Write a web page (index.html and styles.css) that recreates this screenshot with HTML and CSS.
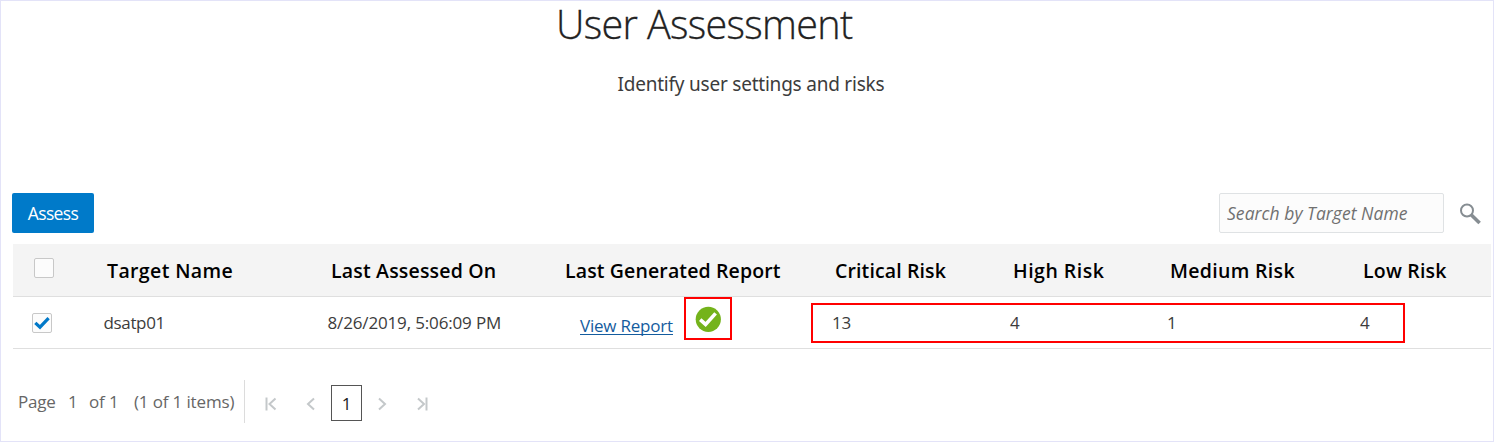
FILE: index.html
```html
<!DOCTYPE html>
<html lang="en">
<head>
<meta charset="utf-8">
<title>User Assessment</title>
<link rel="stylesheet" href="styles.css">
</head>
<body>
<main class="page">
  <header class="intro">
    <h1 class="title">User Assessment</h1>
    <p class="subtitle">Identify user settings and risks</p>
  </header>
  <div class="toolbar">
    <button class="assess" type="button"><span>Assess</span></button>
    <div class="search">
      <input class="search-input" type="text" placeholder="Search by Target Name">
      <svg class="search-icon" viewBox="0 0 22 22" width="22" height="22"><circle cx="8" cy="7.5" r="6" fill="none" stroke="#868d92" stroke-width="2"/><path d="M12.4 12l8.2 8" stroke="#868d92" stroke-width="3.6" fill="none"/></svg>
    </div>
  </div>
  <section class="table">
    <div class="row head">
      <div class="pick"><span class="box"></span></div>
      <div class="t-name">Target Name</div>
      <div class="t-date">Last Assessed On</div>
      <div class="t-report">Last Generated Report</div>
      <div class="t-crit">Critical Risk</div>
      <div class="t-high">High Risk</div>
      <div class="t-med">Medium Risk</div>
      <div class="t-low">Low Risk</div>
    </div>
    <div class="row data">
      <div class="pick"><span class="box"><svg viewBox="0 0 16 16" width="16" height="16"><path d="M1.3 7.8L6 12.2L14.6 3.2" fill="none" stroke="#0078c8" stroke-width="3.2"/></svg></span></div>
      <div class="name">dsatp01</div>
      <div class="date">8/26/2019, 5:06:09 PM</div>
      <div class="report"><a class="link" href="#">View Report</a><span class="status"><svg viewBox="0 0 26 26" width="26" height="26"><circle cx="13.3" cy="13.3" r="12.6" fill="#74b31b"/><path d="M5.2 13.6L10.6 18.4L20.6 7.4" fill="none" stroke="#fff" stroke-width="3.6"/></svg></span></div>
      <div>13</div>
      <div>4</div>
      <div>1</div>
      <div>4</div>
      <div class="highlight"></div>
    </div>
  </section>
  <footer class="pager">
    <div class="summary"><span class="word">Page</span><span class="current">1</span><span class="of">of 1</span><span class="items">(1 of 1 items)</span></div>
    <nav class="nav">
      <svg class="first" viewBox="0 0 12 14" width="12" height="14"><path d="M1.5 .5v13"/><path d="M10.5 1.5L4.5 7l6 5.5"/></svg>
      <svg class="prev" viewBox="0 0 12 14" width="12" height="14"><path d="M9 1.5L3 7l6 5.5"/></svg>
      <span class="number">1</span>
      <svg class="next" viewBox="0 0 12 14" width="12" height="14"><path d="M3 1.5L9 7l-6 5.5"/></svg>
      <svg class="last" viewBox="0 0 12 14" width="12" height="14"><path d="M2 1.5L8 7l-6 5.5"/><path d="M10.5 .5v13"/></svg>
    </nav>
  </footer>
</main>
</body>
</html>
```
FILE: styles.css
```css
* { box-sizing: border-box; }
body { margin: 0; background: #fff; color: #3c3c3c; font-family: "Open Sans", "Noto Sans", sans-serif; }
.page { width: 1494px; height: 442px; border: 1px solid #e3e3f8; }
.intro { height: 192px; }
.title { margin: 0; padding: 0 0 0 555px; font-size: 39.5px; font-weight: 300; line-height: 46px; letter-spacing: -.65px; white-space: nowrap; color: #222; -webkit-text-stroke: .3px #222; }
.subtitle { margin: 0; padding: 23px 0 0 616.5px; font: 19px/28px "Noto Sans", sans-serif; letter-spacing: -.22px; color: #3c3c3c; }
.toolbar { height: 51px; padding: 0 12px 0 11px; display: flex; justify-content: space-between; align-items: flex-start; }
.assess { width: 82px; height: 40px; padding: 0; border: 0; border-radius: 2px; background: #007ac9; color: #fff; font: 17.5px/40px "Open Sans", sans-serif; letter-spacing: -.65px; }
.search { display: flex; gap: 15px; }
.search-input { width: 225px; height: 40px; padding: 0 7px; border: 1px solid #dfe2e4; border-radius: 2px; background: #fcfcfc; font: italic 17.5px "Open Sans", sans-serif; letter-spacing: .05px; outline: 0; }
.search-input::placeholder { color: #707070; opacity: 1; }
.search-icon { margin-top: 10px; }
.table { width: 1478px; margin-left: 12px; }
.row { display: grid; grid-template-columns: 91px 224px 234px 270px 178px 157px 193px 131px; position: relative; border-bottom: 1px solid #dfdfdf; white-space: nowrap; }
.head { height: 53px; background: #f4f4f4; color: #000; font-size: 19.5px; font-weight: 600; line-height: 54px; }
.data { height: 52px; font-size: 17px; line-height: 52px; letter-spacing: -.23px; }
.head > div:not(.pick) { padding-left: 3px; }
.head .t-name, .head .t-date { padding-left: 2px; }
.t-name { letter-spacing: .37px; }
.t-date { letter-spacing: .18px; }
.t-report { letter-spacing: .13px; }
.t-crit { letter-spacing: .12px; }
.head .t-high { padding-left: 2px; letter-spacing: .5px; }
.t-med { letter-spacing: .32px; }
.t-low { letter-spacing: .2px; }
.pick { padding: 14px 0 0 21px; line-height: 0; }
.data .pick { padding: 16px 0 0 19px; }
.box { display: inline-flex; align-items: center; justify-content: center; width: 20px; height: 20px; border: 1px solid #c8c8c8; border-radius: 2px; background: #fcfcfc; }
.date { letter-spacing: -.15px; }
.date, .name { text-indent: -.5px; }
.name { letter-spacing: -.35px; }
.report { display: flex; padding-left: 18px; }
.link { height: 20px; margin-top: 18px; line-height: 22px; color: #145c9e; text-decoration: none; border-bottom: 1px solid #145c9e; }
.status { display: flex; align-items: center; justify-content: center; width: 48px; height: 43px; margin: 0 0 0 11px; border: 2px solid #f00; }
.highlight { position: absolute; left: 798px; top: 6px; width: 594px; height: 40px; border: 2px solid #f00; }
.pager { display: flex; padding-top: 31px; }
.summary { width: 244px; height: 43px; padding-left: 17px; border-right: 1px solid #dcdcdc; font-size: 17px; line-height: 43px; letter-spacing: -.15px; color: #666; display: flex; white-space: nowrap; }
.word { width: 50px; letter-spacing: -.2px; }
.current { width: 21px; }
.of { width: 45px; }
.nav { display: flex; padding-left: 20px; }
.nav svg { fill: none; stroke: #c4c8ca; stroke-width: 2; margin-top: 17px; }
.prev { margin-left: 28px; }
.number { width: 31px; height: 36px; margin: 5px 14px 0 14px; border: 1px solid #555; text-align: center; font-size: 17px; line-height: 35px; color: #222; }
.next { margin-right: 28px; }
```
